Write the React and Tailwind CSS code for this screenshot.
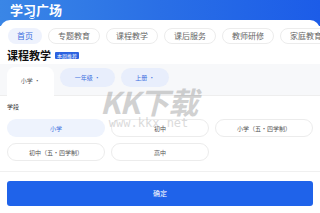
export default function App() {
  const tabs = ["首页", "专题教育", "课程教学", "课后服务", "教师研修", "家庭教育"];
  const stages = [
    { label: "小学", active: true },
    { label: "初中", active: false },
    { label: "小学（五·四学制）", active: false },
    { label: "初中（五·四学制）", active: false },
    { label: "高中", active: false },
  ];

  return (
    <div
      className="relative w-[320px] h-[213px] overflow-hidden bg-white"
      style={{ fontFamily: '"Noto Sans CJK SC", "Noto Sans", sans-serif' }}
    >
      {/* header */}
      <div className="h-[26px] bg-gradient-to-r from-[#3a86e6] via-[#2a6fe6] to-[#1c5ce8] px-[10px] pt-[1px]">
        <div className="relative w-fit text-[13px] font-bold leading-[18px] text-white">
          学习广场
          <span className="absolute left-[19px] top-[15px] h-[3px] w-[6px] rounded-b-full border-b-[1.5px] border-white"></span>
        </div>
      </div>

      {/* sheet */}
      <div className="-mt-[6px] rounded-t-[10px] bg-white">
        <div className="flex gap-[6px] overflow-hidden whitespace-nowrap px-[8px] pt-[8px]">
          {tabs.map((t, i) => (
            <div
              key={t}
              className={
                i === 0
                  ? "flex h-[16px] shrink-0 items-center rounded-full bg-[#eef2fd] px-[9px] text-[8px] text-[#3c6fe0]"
                  : "flex h-[16px] shrink-0 items-center rounded-full border border-[#ececec] px-[9px] text-[8px] text-[#666]"
              }
            >
              {t}
            </div>
          ))}
        </div>

        <div className="flex items-center gap-[4px] px-[7px] pt-[4px]">
          <span className="text-[11px] font-bold leading-[14px] text-[#111]">课程教学</span>
          <span className="rounded-[1px] bg-[#2b62e0] px-[2px] text-[5px] leading-[7px] text-white">本周推荐</span>
        </div>

        {/* filter row */}
        <div className="mt-[2px] flex items-end gap-[6px] border-b border-[#eeeeee] bg-[#f7f8fa] px-[7px] pt-[3px]">
          <div className="-mb-px flex h-[29px] w-[47px] items-center justify-center rounded-t-[8px] bg-white pb-[3px] text-[6px] text-[#555]">
            小学 ·
          </div>
          <div className="mb-[8px] flex h-[19px] w-[55px] items-center justify-center rounded-full bg-[#e8eefc] text-[6px] text-[#3c6fe0]">
            一年级 ·
          </div>
          <div className="mb-[8px] flex h-[19px] w-[48px] items-center justify-center rounded-full bg-[#e8eefc] text-[6px] text-[#3c6fe0]">
            上册 ·
          </div>
        </div>

        <div className="px-[7px] pt-[6px]">
          <div className="text-[6px] leading-[10px] text-[#333]">学段</div>
          <div className="mt-[7px] grid grid-cols-3 gap-x-[6px] gap-y-[6px]">
            {stages.map((s) => (
              <div
                key={s.label}
                className={
                  s.active
                    ? "flex h-[18px] items-center justify-center rounded-full bg-[#eef3fd] text-[6px] text-[#3c6fe0]"
                    : "flex h-[18px] items-center justify-center rounded-full border border-[#ececec] text-[6px] text-[#555]"
                }
              >
                {s.label}
              </div>
            ))}
          </div>
        </div>

        <div className="mt-[10px] border-t border-[#f0f0f0] px-[7px] pt-[9px]">
          <div className="flex h-[25px] items-center justify-center rounded-[3px] bg-[#1f63ea] text-[7px] text-white">
            确定
          </div>
        </div>
      </div>

      {/* watermark */}
      <div className="pointer-events-none absolute left-[100px] top-[84px] flex flex-col items-center opacity-45">
        <span className="text-[30px] font-bold italic leading-[34px] tracking-[-1px] text-[#9a9a9a]">KK下载</span>
        <span className="-mt-[2px] text-[12px] leading-[14px] text-[#b0b0b0]" style={{ fontFamily: '"DejaVu Sans Mono", monospace' }}>
          www.kkx.net
        </span>
      </div>
    </div>
  );
}
